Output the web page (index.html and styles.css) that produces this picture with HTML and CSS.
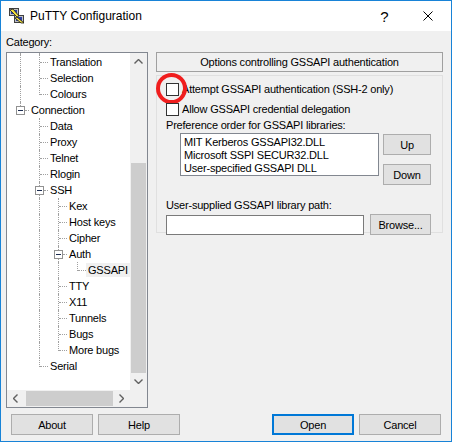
FILE: index.html
```html
<!DOCTYPE html>
<html>
<head>
<meta charset="utf-8">
<title>PuTTY Configuration</title>
<link rel="stylesheet" href="styles.css">
</head>
<body>
<div class="window">
  <div class="titlebar">
    <svg class="appicon" width="16" height="16" viewBox="0 0 16 16">
      <rect x="0.5" y="0.5" width="9" height="7" fill="#c0c0c0" stroke="#404040"/>
      <rect x="2" y="2" width="6" height="4" fill="#2b3fa6"/>
      <rect x="5.5" y="7.5" width="9" height="7" fill="#c0c0c0" stroke="#404040"/>
      <rect x="7" y="9" width="6" height="4" fill="#2b3fa6"/>
      <polygon points="1,2 4,1 10,8 8,9 15,15 12,15 6,10 8,9" fill="#f4e23a" stroke="#1a1a1a" stroke-width="0.8" stroke-linejoin="round"/>
    </svg>
    <span class="title">PuTTY Configuration</span>
    <span class="tbtn help">?</span>
    <span class="tbtn close">
      <svg width="10" height="10" viewBox="0 0 10 10"><path d="M0.5 0.5 L9.5 9.5 M9.5 0.5 L0.5 9.5" stroke="#000" stroke-width="1" fill="none"/></svg>
    </span>
  </div>
  <div class="client">
    <div class="main">
      <div class="left">
        <div class="cat-label">Category:</div>
        <div class="tree">
          <div class="tree-rows">
            <div class="row first"><span class="cell v"></span><span class="cell t"></span></div>
            <div class="row"><span class="cell v"></span><span class="cell t"></span><span class="label">Translation</span></div>
            <div class="row"><span class="cell v"></span><span class="cell t"></span><span class="label">Selection</span></div>
            <div class="row"><span class="cell v"></span><span class="cell e"></span><span class="label">Colours</span></div>
            <div class="row"><span class="cell e bx"><i class="box"></i></span><span class="label">Connection</span></div>
            <div class="row"><span class="cell"></span><span class="cell t"></span><span class="label">Data</span></div>
            <div class="row"><span class="cell"></span><span class="cell t"></span><span class="label">Proxy</span></div>
            <div class="row"><span class="cell"></span><span class="cell t"></span><span class="label">Telnet</span></div>
            <div class="row"><span class="cell"></span><span class="cell t"></span><span class="label">Rlogin</span></div>
            <div class="row"><span class="cell"></span><span class="cell t bx"><i class="box"></i></span><span class="label">SSH</span></div>
            <div class="row"><span class="cell"></span><span class="cell v"></span><span class="cell t"></span><span class="label">Kex</span></div>
            <div class="row"><span class="cell"></span><span class="cell v"></span><span class="cell t"></span><span class="label">Host keys</span></div>
            <div class="row"><span class="cell"></span><span class="cell v"></span><span class="cell t"></span><span class="label">Cipher</span></div>
            <div class="row"><span class="cell"></span><span class="cell v"></span><span class="cell t bx"><i class="box"></i></span><span class="label">Auth</span></div>
            <div class="row"><span class="cell"></span><span class="cell v"></span><span class="cell v"></span><span class="cell e"></span><span class="label selected">GSSAPI</span></div>
            <div class="row"><span class="cell"></span><span class="cell v"></span><span class="cell t"></span><span class="label">TTY</span></div>
            <div class="row"><span class="cell"></span><span class="cell v"></span><span class="cell t"></span><span class="label">X11</span></div>
            <div class="row"><span class="cell"></span><span class="cell v"></span><span class="cell t"></span><span class="label">Tunnels</span></div>
            <div class="row"><span class="cell"></span><span class="cell v"></span><span class="cell t"></span><span class="label">Bugs</span></div>
            <div class="row"><span class="cell"></span><span class="cell v"></span><span class="cell e"></span><span class="label">More bugs</span></div>
            <div class="row"><span class="cell"></span><span class="cell e"></span><span class="label">Serial</span></div>
          </div>
          <div class="vscroll">
            <div class="arrow"><svg width="9" height="5" viewBox="0 0 9 5"><path d="M0.5 4.5 L4.5 0.5 L8.5 4.5" stroke="#606060" stroke-width="1.4" fill="none"/></svg></div>
            <div class="vtrack"><div class="vthumb"></div></div>
            <div class="arrow"><svg width="9" height="5" viewBox="0 0 9 5"><path d="M0.5 0.5 L4.5 4.5 L8.5 0.5" stroke="#606060" stroke-width="1.4" fill="none"/></svg></div>
          </div>
          <div class="hscroll">
            <div class="arrow"><svg width="5" height="9" viewBox="0 0 5 9"><path d="M4.5 0.5 L0.5 4.5 L4.5 8.5" stroke="#606060" stroke-width="1.4" fill="none"/></svg></div>
            <div class="htrack"><div class="hthumb"></div></div>
            <div class="arrow"><svg width="5" height="9" viewBox="0 0 5 9"><path d="M0.5 0.5 L4.5 4.5 L0.5 8.5" stroke="#606060" stroke-width="1.4" fill="none"/></svg></div>
          </div>
          <div class="corner"></div>
        </div>
      </div>
      <div class="panel">
        <div class="panel-title">Options controlling GSSAPI authentication</div>
        <div class="group">
          <div class="check-row">
            <span class="checkbox"><span class="ring"></span></span>
            <span>Attempt GSSAPI authentication (SSH-2 only)</span>
          </div>
          <div class="check-row">
            <span class="checkbox"></span>
            <span>Allow GSSAPI credential delegation</span>
          </div>
          <div class="text-label">Preference order for GSSAPI libraries:</div>
          <div class="list-row">
            <div class="listbox">
              <div>MIT Kerberos GSSAPI32.DLL</div>
              <div>Microsoft SSPI SECUR32.DLL</div>
              <div>User-specified GSSAPI DLL</div>
            </div>
            <div class="list-buttons">
              <button class="btn small">Up</button>
              <button class="btn small">Down</button>
            </div>
          </div>
          <div class="text-label path-label">User-supplied GSSAPI library path:</div>
          <div class="path-row">
            <div class="edit"></div>
            <button class="btn browse">Browse...</button>
          </div>
        </div>
      </div>
    </div>
    <div class="buttons">
      <div class="btn-group">
        <button class="btn">About</button>
        <button class="btn">Help</button>
      </div>
      <div class="btn-group">
        <button class="btn default">Open</button>
        <button class="btn">Cancel</button>
      </div>
    </div>
  </div>
</div>
</body>
</html>
```

FILE: styles.css
```css
* { box-sizing: border-box; }

html, body {
  margin: 0;
  padding: 0;
  background: #f0f0f0;
}

body {
  font-family: "Liberation Sans", Arial, sans-serif;
  font-size: 11px;
  letter-spacing: -0.2px;
  color: #000;
}

.window {
  width: 452px;
  height: 442px;
  border: 1px solid #1883d7;
  display: flex;
  flex-direction: column;
  background: #f0f0f0;
}

/* title bar */
.titlebar {
  height: 30px;
  background: #fff;
  display: flex;
  align-items: center;
  flex-shrink: 0;
}
.appicon { margin-left: 8px; flex-shrink: 0; }
.title {
  margin-left: 5px;
  font-size: 12px;
  letter-spacing: 0;
}
.tbtn {
  width: 46px;
  height: 30px;
  display: flex;
  align-items: center;
  justify-content: center;
}
.help {
  margin-left: auto;
  font-size: 15px;
  letter-spacing: 0;
  padding-left: 5px;
  padding-top: 1px;
}

/* client area */
.client {
  flex: 1;
  display: flex;
  flex-direction: column;
  padding: 5px 8px 6px 5px;
}
.main {
  display: grid;
  grid-template-columns: 142px 287px;
  column-gap: 8px;
}
.left { display: flex; flex-direction: column; }
.cat-label {
  height: 16px;
  line-height: 13px;
}

/* tree */
.tree {
  height: 356px;
  border: 1px solid #828790;
  background: #fff;
  display: grid;
  grid-template-columns: 1fr 17px;
  grid-template-rows: 1fr 17px;
}
.tree-rows {
  overflow: hidden;
  padding-left: 3px;
}
.row {
  display: flex;
  align-items: center;
  height: 16px;
  white-space: nowrap;
}
.row.first { margin-top: -15px; }
.cell {
  position: relative;
  width: 19px;
  height: 16px;
  flex-shrink: 0;
}
.cell.v::before,
.cell.t::before,
.cell.e::before {
  content: "";
  position: absolute;
  left: 10px;
  top: 0;
  height: 16px;
  border-left: 1px dotted #a0a0a0;
}
.cell.e::before { height: 9px; }
.cell.t::after,
.cell.e::after {
  content: "";
  position: absolute;
  left: 11px;
  top: 8px;
  width: 8px;
  border-top: 1px dotted #a0a0a0;
}
.cell.bx::after { left: 15px; width: 4px; }
.cell.bx.e::before { height: 4px; }
.box {
  position: absolute;
  left: 6px;
  top: 4px;
  width: 9px;
  height: 9px;
  border: 1px solid #919191;
  background: #fff;
  z-index: 1;
}
.box::after {
  content: "";
  position: absolute;
  left: 1px;
  top: 3px;
  width: 5px;
  height: 1px;
  background: #1c2c50;
}
.label {
  height: 14px;
  line-height: 14px;
  padding: 0 2px;
}
.label.selected { background: #f0f0f0; padding-right: 4px; }

/* scrollbars */
.vscroll {
  background: #f0f0f0;
  display: flex;
  flex-direction: column;
}
.vscroll .arrow {
  height: 17px;
  display: flex;
  align-items: center;
  justify-content: center;
}
.vtrack {
  flex: 1;
  display: flex;
  flex-direction: column;
  justify-content: flex-end;
}
.vthumb {
  height: 210px;
  margin: 0 1px;
  background: #cdcdcd;
}
.hscroll {
  background: #f0f0f0;
  display: flex;
}
.hscroll .arrow {
  width: 17px;
  display: flex;
  align-items: center;
  justify-content: center;
}
.htrack {
  flex: 1;
  padding: 1px 0 1px 2px;
}
.hthumb {
  width: 87px;
  height: 15px;
  background: #cdcdcd;
}
.corner { background: #f0f0f0; }

/* right panel */
.panel {
  margin-top: 16px;
  display: flex;
  flex-direction: column;
}
.panel-title {
  height: 20px;
  border: 1px solid #a0a0a0;
  text-align: center;
  line-height: 18px;
}
.group {
  margin-top: 3px;
  height: 158px;
  border: 1px solid #e0e0e0;
  padding: 3px 11px 0 9px;
}
.check-row {
  height: 20px;
  display: flex;
  align-items: center;
}
.checkbox {
  position: relative;
  width: 13px;
  height: 13px;
  border: 1px solid #333;
  background: #fff;
  margin-right: 3px;
  flex-shrink: 0;
}
.ring {
  position: absolute;
  left: -11px;
  top: -11px;
  width: 31px;
  height: 31px;
  border: 4px solid #f01e1e;
  border-radius: 50%;
}
.text-label {
  height: 14px;
  line-height: 13px;
}
.list-row {
  display: flex;
  align-items: flex-start;
}
.listbox {
  margin-left: 14px;
  width: 199px;
  height: 43px;
  border: 1px solid #828790;
  background: #fff;
  padding: 2px 0 0 3px;
  line-height: 13px;
}
.list-buttons {
  margin-left: 4px;
  margin-top: 1px;
  display: flex;
  flex-direction: column;
  gap: 9px;
}
.btn {
  font-family: inherit;
  font-size: 11px;
  letter-spacing: -0.2px;
  color: #000;
  background: #e1e1e1;
  border: 1px solid #adadad;
  height: 21px;
  width: 82px;
  padding: 0;
  margin: 0;
}
.btn.small { width: 48px; }
.path-label { margin-top: 14px; height: 15px; }
.path-row {
  display: flex;
  align-items: flex-start;
}
.edit {
  margin-top: 1px;
  width: 198px;
  height: 20px;
  border: 1px solid #7a7a7a;
  background: #fff;
}
.btn.browse { width: 61px; margin-left: 6px; }

/* bottom buttons */
.buttons {
  margin-top: 6px;
  display: flex;
  justify-content: space-between;
  padding: 0 2px 0 5px;
}
.btn-group { display: flex; gap: 5px; }
.btn.default {
  border: 1px solid #0078d7;
  box-shadow: inset 0 0 0 1px #0078d7;
}
```
